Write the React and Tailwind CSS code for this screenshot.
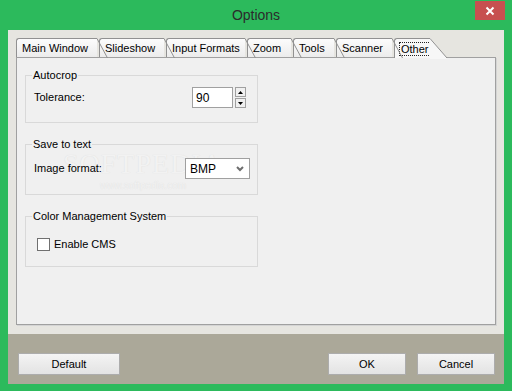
import React from 'react';

const tabs = [
  { label: 'Main Window', w: 'w-[81px]' },
  { label: 'Slideshow', w: 'w-[65px]' },
  { label: 'Input Formats', w: 'w-[79px]' },
  { label: 'Zoom', w: 'w-[44px]' },
  { label: 'Tools', w: 'w-[41px]' },
  { label: 'Scanner', w: 'w-[56px]' },
  { label: 'Other', w: 'w-[36px]', active: true },
];

function Tab({ label, w, active }) {
  if (active) {
    return (
      <div className={`relative z-10 -mb-px flex h-[20px] shrink-0 items-start rounded-tl-[3px] border-l border-t border-[#919191] bg-[#f7f7f7] pl-[4px] pt-[3px] ${w}`}>
        <span className="border border-dotted border-[#222] px-px leading-[12px]">{label}</span>
        <svg className="absolute left-full top-[-1px]" width="18" height="21" viewBox="0 0 18 21">
          <polygon points="0,0 17,20 17,21 0,21" fill="#f7f7f7" />
          <line x1="0" y1="0.5" x2="17" y2="20" stroke="#919191" strokeWidth="1" />
        </svg>
      </div>
    );
  }
  return (
    <div className={`relative flex h-[19px] shrink-0 items-center rounded-tl-[3px] border-l border-t border-[#919191] bg-gradient-to-b from-[#fcfcfc] to-[#ececec] pl-[5px] ${w}`}>
      <span className="leading-[13px]">{label}</span>
      <svg className="absolute left-full top-[-1px] z-20" width="11" height="20" viewBox="0 0 11 20">
        <line x1="0" y1="0.5" x2="10.5" y2="20" stroke="#919191" strokeWidth="1" />
      </svg>
    </div>
  );
}

function Group({ title, className, children }) {
  return (
    <div className={`relative w-[233px] border border-[#d9d9d9] ${className}`}>
      <span className="absolute left-[6px] top-[-8px] bg-[#f0f0f0] px-px leading-[14px]">{title}</span>
      {children}
    </div>
  );
}

function Button({ children, className }) {
  return (
    <div className={`flex h-[22px] items-center justify-center border border-[#acacac] bg-gradient-to-b from-[#f4f4f4] to-[#e3e3e3] ${className}`}>
      {children}
    </div>
  );
}

export default function App() {
  return (
    <div className="flex h-[391px] w-[512px] flex-col bg-[#2cba5c] font-['Liberation_Sans',Arial,sans-serif] text-[11px] text-black">
      <div className="relative flex h-[30px] shrink-0 items-center justify-center">
        <span className="text-[14px] text-[#2b2b2b]">Options</span>
        <div className="absolute right-[7px] top-px flex h-[19px] w-[30px] items-center justify-center bg-[#c75050]">
          <svg width="10" height="10" viewBox="0 0 10 10">
            <path d="M1.5 1.5 L8.5 8.5 M8.5 1.5 L1.5 8.5" stroke="#fff" strokeWidth="2" />
          </svg>
        </div>
      </div>

      <div className="mx-[8px] mb-[8px] flex flex-1 flex-col bg-[#e6e5e0]">
        <div className="flex flex-col pb-[9px] pt-[8px]">
          <div className="flex items-end gap-[2px] pl-[8px]">
            {tabs.map((t) => (
              <Tab key={t.label} {...t} />
            ))}
          </div>
          <div className="relative mx-[8px] h-[268px] border border-[#a0a0a0] bg-[#f0f0f0] pl-[8px] pt-[17px] shadow-[1px_1px_0_#d4d4d4]">
            {/* faint watermark, behind the controls */}
            <div className="pointer-events-none absolute left-[46px] top-[92px] flex flex-col items-center text-[#f2f2f2] [text-shadow:0_0_1px_#dadada]">
              <span className="font-['Liberation_Serif',serif] text-[28px] leading-[28px] tracking-[1px]">SOFTPEDIA</span>
              <span className="mt-[3px] text-[10px] leading-[10px]">www.softpedia.com</span>
            </div>

            <div className="relative flex flex-col gap-[21px]">
              <Group title="Autocrop" className="h-[48px] pl-[8px] pt-[11px]">
                <div className="flex items-center">
                  <span className="w-[158px]">Tolerance:</span>
                  <div className="flex h-[21px] w-[41px] items-center border border-[#a0a0a0] bg-white pl-[3px] text-[12px]">90</div>
                  <div className="ml-[2px] flex flex-col gap-px">
                    <div className="flex h-[10px] w-[11px] items-center justify-center border border-[#a0a0a0] bg-[#f0f0f0]">
                      <svg width="5" height="3" viewBox="0 0 5 3"><polygon points="2.5,0 5,3 0,3" fill="#000" /></svg>
                    </div>
                    <div className="flex h-[10px] w-[11px] items-center justify-center border border-[#a0a0a0] bg-[#f0f0f0]">
                      <svg width="5" height="3" viewBox="0 0 5 3"><polygon points="0,0 5,0 2.5,3" fill="#000" /></svg>
                    </div>
                  </div>
                </div>
              </Group>

              <Group title="Save to text" className="h-[51px] pl-[8px] pt-[13px]">
                <div className="flex items-center">
                  <span className="w-[151px]">Image format:</span>
                  <div className="flex h-[21px] w-[65px] items-center justify-between border border-[#a0a0a0] bg-white pl-[4px] pr-[5px] text-[12px]">
                    <span>BMP</span>
                    <svg width="8" height="6" viewBox="0 0 8 6">
                      <path d="M1 1 L4 4 L7 1" fill="none" stroke="#6e6e6e" strokeWidth="2" />
                    </svg>
                  </div>
                </div>
              </Group>

              <Group title="Color Management System" className="h-[51px] pl-[11px] pt-[19px]">
                <div className="flex items-center gap-[4px]">
                  <div className="h-[13px] w-[13px] border border-[#707070] bg-white" />
                  <span>Enable CMS</span>
                </div>
              </Group>
            </div>
          </div>
        </div>

        <div className="flex h-[50px] items-start bg-[#aba899] pl-[10px] pr-[9px] pt-[19px]">
          <Button className="w-[102px]">Default</Button>
          <Button className="ml-auto w-[78px]">OK</Button>
          <Button className="ml-[11px] w-[78px]">Cancel</Button>
        </div>
      </div>
    </div>
  );
}
